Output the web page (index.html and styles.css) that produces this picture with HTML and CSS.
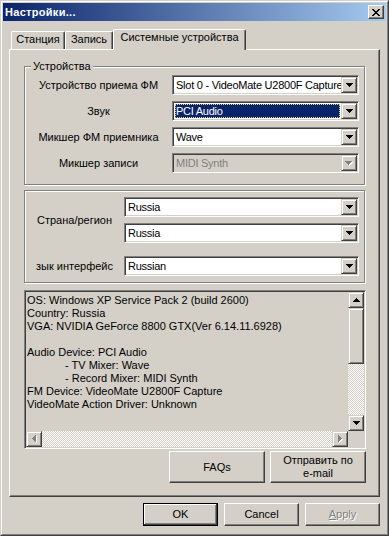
FILE: index.html
```html
<!DOCTYPE html>
<html>
<head>
<meta charset="utf-8">
<title>Настройки</title>
<link rel="stylesheet" href="styles.css">
</head>
<body>
<div class="window">
  <div class="frame">
    <div class="titlebar">
      <span class="title">Настройки...</span>
      <span class="close">
        <svg width="8" height="7" viewBox="0 0 8 7" shape-rendering="crispEdges"><path d="M0 0h2v1h1v1h2v-1h1v-1h2v1h-1v1h-1v1h-1v1h1v1h1v1h1v1h-2v-1h-1v-1h-2v1h-1v1h-2v-1h1v-1h1v-1h1v-1h-1v-1h-1v-1h-1z"/></svg>
      </span>
    </div>
    <div class="client">
      <div class="tabs">
        <div class="tab t1">Станция</div>
        <div class="tab t2">Запись</div>
        <div class="tab active">Системные устройства</div>
      </div>
      <div class="panel">
        <div class="group g1">
          <span class="group-title">Устройства</span>
          <label class="lbl">Устройство приема ФМ</label>
          <div class="combo"><span class="val">Slot 0 - VideoMate U2800F Capture</span><span class="dd"><svg width="7" height="4" viewBox="0 0 7 4" shape-rendering="crispEdges"><path d="M0 0h7v1h-1v1h-1v1h-1v1h-1v-1h-1v-1h-1v-1h-1z"/></svg></span></div>
          <label class="lbl">Звук</label>
          <div class="combo"><span class="val sel">PCI Audio</span><span class="dd"><svg width="7" height="4" viewBox="0 0 7 4" shape-rendering="crispEdges"><path d="M0 0h7v1h-1v1h-1v1h-1v1h-1v-1h-1v-1h-1v-1h-1z"/></svg></span></div>
          <label class="lbl">Микшер ФМ приемника</label>
          <div class="combo"><span class="val">Wave</span><span class="dd"><svg width="7" height="4" viewBox="0 0 7 4" shape-rendering="crispEdges"><path d="M0 0h7v1h-1v1h-1v1h-1v1h-1v-1h-1v-1h-1v-1h-1z"/></svg></span></div>
          <label class="lbl">Микшер записи</label>
          <div class="combo disabled"><span class="val">MIDI Synth</span><span class="dd"><svg width="8" height="5" viewBox="0 0 8 5" shape-rendering="crispEdges"><path fill="#fff" d="M1 1h7v1h-1v1h-1v1h-1v1h-1v-1h-1v-1h-1v-1h-1z"/><path fill="#808080" d="M0 0h7v1h-1v1h-1v1h-1v1h-1v-1h-1v-1h-1v-1h-1z"/></svg></span></div>
        </div>

        <div class="group g2">
          <label class="lbl country">Страна/регион</label>
          <div class="combo c1"><span class="val">Russia</span><span class="dd"><svg width="7" height="4" viewBox="0 0 7 4" shape-rendering="crispEdges"><path d="M0 0h7v1h-1v1h-1v1h-1v1h-1v-1h-1v-1h-1v-1h-1z"/></svg></span></div>
          <div class="combo c2"><span class="val">Russia</span><span class="dd"><svg width="7" height="4" viewBox="0 0 7 4" shape-rendering="crispEdges"><path d="M0 0h7v1h-1v1h-1v1h-1v1h-1v-1h-1v-1h-1v-1h-1z"/></svg></span></div>
          <label class="lbl lang">зык интерфейс</label>
          <div class="combo c3"><span class="val">Russian</span><span class="dd"><svg width="7" height="4" viewBox="0 0 7 4" shape-rendering="crispEdges"><path d="M0 0h7v1h-1v1h-1v1h-1v1h-1v-1h-1v-1h-1v-1h-1z"/></svg></span></div>
        </div>

        <div class="edit">
          <div class="text">
            <div>OS: Windows XP Service Pack 2 (build 2600)</div>
            <div>Country: Russia</div>
            <div>VGA: NVIDIA GeForce 8800 GTX(Ver 6.14.11.6928)</div>
            <div>&nbsp;</div>
            <div>Audio Device: PCI Audio</div>
            <div class="ind">- TV Mixer: Wave</div>
            <div class="ind">- Record Mixer: MIDI Synth</div>
            <div>FM Device: VideoMate U2800F Capture</div>
            <div>VideoMate Action Driver: Unknown</div>
          </div>
          <div class="vscroll">
            <span class="sbtn"><svg width="7" height="4" viewBox="0 0 7 4" shape-rendering="crispEdges"><path d="M3 0h1v1h1v1h1v1h1v1h-7v-1h1v-1h1v-1h1z"/></svg></span>
            <span class="thumb"></span>
            <span class="track"></span>
            <span class="sbtn"><svg width="7" height="4" viewBox="0 0 7 4" shape-rendering="crispEdges"><path d="M0 0h7v1h-1v1h-1v1h-1v1h-1v-1h-1v-1h-1v-1h-1z"/></svg></span>
          </div>
          <div class="hscroll">
            <span class="sbtn"><svg width="5" height="8" viewBox="0 0 5 8" shape-rendering="crispEdges"><path fill="#fff" d="M5 1v7h-1v-1h-1v-1h-1v-1h-1v-1h1v-1h1v-1h1v-1z"/><path fill="#808080" d="M4 0v7h-1v-1h-1v-1h-1v-1h-1v-1h1v-1h1v-1h1v-1z"/></svg></span>
            <span class="track"></span>
            <span class="sbtn"><svg width="5" height="8" viewBox="0 0 5 8" shape-rendering="crispEdges"><path fill="#fff" d="M1 1h1v1h1v1h1v1h1v1h-1v1h-1v1h-1v1h-1z"/><path fill="#808080" d="M0 0h1v1h1v1h1v1h1v1h-1v1h-1v1h-1v1h-1z"/></svg></span>
          </div>
          <div class="corner"></div>
        </div>

        <div class="extra">
          <div class="btn wide">FAQs</div>
          <div class="btn wide">Отправить по<br>e-mail</div>
        </div>
      </div>

      <div class="dlg-buttons">
        <div class="btn dlg default">OK</div>
        <div class="btn dlg">Cancel</div>
        <div class="btn dlg disabled"><span><u>A</u>pply</span></div>
      </div>
    </div>
  </div>
</div>
</body>
</html>
```

FILE: styles.css
```css
* { box-sizing: border-box; }

body {
  margin: 0;
  font-family: "Liberation Sans", Arial, sans-serif;
  font-size: 11px;
  line-height: 13px;
  color: #000;
  background: #d4d0c8;
}

.window {
  width: 389px;
  height: 536px;
  background: #d4d0c8;
  border: 1px solid;
  border-color: #d4d0c8 #404040 #404040 #d4d0c8;
}

.frame {
  height: 100%;
  border: 1px solid;
  border-color: #fff #808080 #808080 #fff;
  padding: 1px;
}

.titlebar {
  height: 18px;
  display: flex;
  align-items: center;
  justify-content: space-between;
  padding: 0 2px;
  background: linear-gradient(to right, #0a246a, #a6caf0);
}

.title {
  color: #fff;
  font-weight: bold;
  font-size: 11px;
  letter-spacing: 0.3px;
}

.close {
  width: 16px;
  height: 14px;
  background: #d4d0c8;
  border: 1px solid;
  border-color: #fff #404040 #404040 #fff;
  box-shadow: inset -1px -1px #808080;
  display: flex;
  align-items: center;
  justify-content: center;
}

.close svg { display: block; }

.client {
  padding: 8px 6px 0;
}

.tabs {
  display: flex;
  align-items: flex-end;
  height: 20px;
  padding-left: 2px;
}

.tab {
  height: 18px;
  border: 1px solid;
  border-bottom: none;
  border-color: #fff #404040 #fff #fff;
  box-shadow: inset -1px 0 #808080;
  border-radius: 2px 2px 0 0;
  text-align: center;
  padding-top: 1px;
  background: #d4d0c8;
}

.t1 { width: 54px; }
.t2 { width: 48px; }

.tab.active {
  width: 133px;
  height: 21px;
  margin-bottom: -1px;
  position: relative;
  z-index: 1;
  padding-top: 1px;
}

.panel {
  height: 448px;
  border: 1px solid;
  border-color: #fff #404040 #404040 #fff;
  box-shadow: inset -1px -1px #808080;
  padding: 16px 14px 0;
}

.group {
  position: relative;
  border: 1px solid #808080;
  box-shadow: 1px 1px #fff, inset 1px 1px #fff;
}

.group-title {
  position: absolute;
  top: -7px;
  left: 6px;
  padding: 0 2px;
  background: #d4d0c8;
  line-height: 13px;
}

.lbl {
  text-align: center;
  white-space: nowrap;
}

.g1 {
  display: grid;
  grid-template-columns: 147px 187px;
  grid-auto-rows: 20px;
  row-gap: 6px;
  align-items: center;
  padding: 8px 5px 11px 0;
}

.g2 {
  margin-top: 5px;
  display: grid;
  grid-template-columns: 99px 235px;
  grid-template-rows: 20px 6px 20px 13px 20px;
  align-items: center;
  padding: 6px 5px 6px 0;
}

.g2 .country { grid-column: 1; grid-row: 1 / 4; }
.g2 .c1 { grid-column: 2; grid-row: 1; }
.g2 .c2 { grid-column: 2; grid-row: 3; }
.g2 .lang { grid-column: 1; grid-row: 5; }
.g2 .c3 { grid-column: 2; grid-row: 5; }

.combo {
  height: 20px;
  display: flex;
  background: #fff;
  border: 1px solid;
  border-color: #808080 #fff #fff #808080;
  box-shadow: inset 1px 1px #404040, inset -1px -1px #d4d0c8;
  padding: 1px;
}

.combo .val {
  flex: 1;
  min-width: 0;
  padding-left: 2px;
  line-height: 16px;
  white-space: nowrap;
  overflow: hidden;
  letter-spacing: -0.25px;
}

.combo .val.sel {
  background: #0a246a;
  color: #fff;
  outline: 1px dotted #e0d890;
  outline-offset: -1px;
  margin: 1px;
  line-height: 14px;
  padding-left: 1px;
}

.combo.disabled {
  background: #d4d0c8;
}

.combo.disabled .val {
  color: #808080;
}

.dd, .sbtn {
  width: 16px;
  height: 16px;
  flex: none;
  background: #d4d0c8;
  border: 1px solid;
  border-color: #d4d0c8 #404040 #404040 #d4d0c8;
  box-shadow: inset 1px 1px #fff, inset -1px -1px #808080;
  display: flex;
  align-items: center;
  justify-content: center;
}

.dd svg, .sbtn svg { display: block; }

.edit {
  margin-top: 7px;
  width: 342px;
  height: 159px;
  border: 1px solid;
  border-color: #808080 #fff #fff #808080;
  box-shadow: inset 1px 1px #404040, inset -1px -1px #d4d0c8;
  padding: 1px;
  display: grid;
  grid-template-columns: 322px 16px;
  grid-template-rows: 139px 16px;
  background: #d4d0c8;
}

.text {
  padding: 2px 1px;
  line-height: 13px;
  white-space: nowrap;
  overflow: hidden;
}

.text .ind { padding-left: 38px; }

.vscroll {
  display: flex;
  flex-direction: column;
}

.hscroll {
  display: flex;
}

.thumb {
  height: 56px;
  flex: none;
  border: 1px solid;
  border-color: #d4d0c8 #404040 #404040 #d4d0c8;
  box-shadow: inset 1px 1px #fff, inset -1px -1px #808080;
  background: #d4d0c8;
}

.track {
  flex: 1;
  background: repeating-conic-gradient(#fff 0 25%, #d4d0c8 0 50%) 0 0 / 2px 2px;
}

.corner { background: #d4d0c8; }

.extra {
  width: 342px;
  margin-top: 2px;
  display: flex;
  justify-content: flex-end;
  gap: 5px;
}

.btn {
  background: #d4d0c8;
  border: 1px solid;
  border-color: #fff #404040 #404040 #fff;
  box-shadow: inset -1px -1px #808080;
  display: flex;
  align-items: center;
  justify-content: center;
  text-align: center;
}

.btn.wide {
  width: 96px;
  height: 32px;
}

.dlg-buttons {
  margin-top: 6px;
  display: flex;
  justify-content: flex-end;
  gap: 6px;
}

.btn.dlg {
  width: 75px;
  height: 23px;
}

.btn.default {
  border-color: #000;
  box-shadow: inset -1px -1px #404040, inset 1px 1px #fff, inset -2px -2px #808080;
}

.btn.disabled {
  color: #808080;
  text-shadow: 1px 1px #fff;
}
```
